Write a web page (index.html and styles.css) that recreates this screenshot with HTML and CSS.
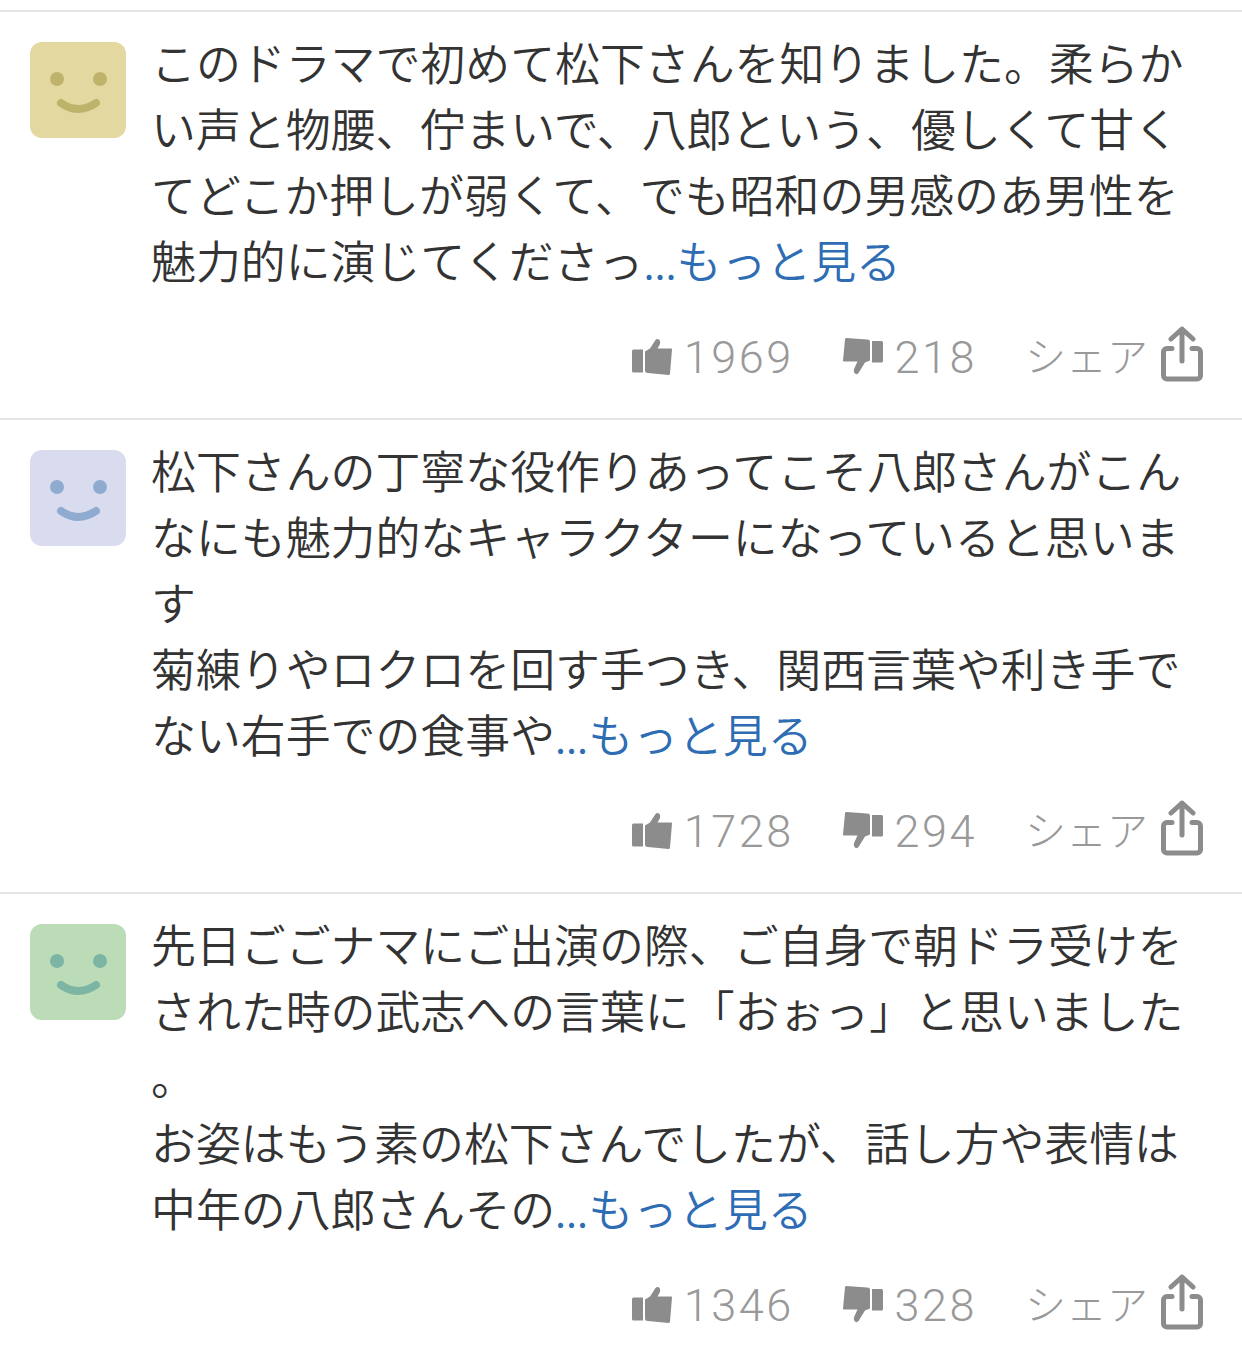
FILE: index.html
```html
<!DOCTYPE html>
<html>
    <head>
        <meta charset="utf-8">
        <title>コメント</title>
        <link rel="stylesheet" href="styles.css">
    </head>
    <body>
      <svg class="defs" width="0" height="0">
        <symbol id="good" viewBox="0 0 40 37">
          <path d="M1.500 11.500h9.500v23H1.500a1.500 1.500 0 0 1-1.500-1.500V13a1.500 1.500 0 0 1 1.500-1.500z"/>
          <path d="M13 13.500l5-3 5.500-8.500c1-1.500 3-1.500 4 0 1 1.500.8 3.500 0 5l-2 3.500H39c.8 0 1 .5 1 1l-2 24c-.1.8-.6 1.500-1.500 1.500L16 35c-2 0-3-.8-3-2.500z"/>
        </symbol>
        <symbol id="bad" viewBox="0 0 40 37">
          <path d="M38.500 3h-9.500v21.500h9.500a1.500 1.500 0 0 0 1.500-1.500V4.500A1.500 1.500 0 0 0 38.500 3z"/>
          <path d="M27 22.500l-5 2-6.500 10.500c-1 1.500-3 1.500-4 0-1-1.500-.8-3.500 0-5l3-6.500H1c-.8 0-1-.5-1-1L2 1.500C2.100.7 2.600 0 3.500 0L24 1.500c2 0 3 .8 3 2.500z"/>
        </symbol>
        <symbol id="share" viewBox="0 0 42 56">
          <path d="M11 22.500H6a3.500 3.500 0 0 0-3.500 3.500v23.500A3.500 3.500 0 0 0 6 53h30a3.500 3.500 0 0 0 3.500-3.500V26a3.500 3.500 0 0 0-3.500-3.500h-5M21 35V3M10 13L21 3l11 10"/>
        </symbol>
      </svg>

      <div class="comment">
        <div class="avatar yellow">
          <svg viewBox="0 0 96 96"><circle class="eye" cx="27" cy="37" r="7"/><circle class="eye" cx="70" cy="37" r="7"/><path class="mouth" d="M31 61q17 12 35 0"/></svg>
        </div>
        <div class="body">
          <p class="text">このドラマで初めて松下さんを知りました。柔らか<br>い声と物腰、佇まいで、八郎という、優しくて甘く<br>てどこか押しが弱くて、でも昭和の男感のあ男性を<br>魅力的に演じてくださっ<a class="more" href="#"><span class="dots">...</span>もっと見る</a></p>
          <div class="actions">
            <svg class="ico"><use href="#good"/></svg><span class="num">1969</span>
            <svg class="ico bad"><use href="#bad"/></svg><span class="num">218</span>
            <span class="shr">シェア</span><svg class="ico-share"><use href="#share"/></svg>
          </div>
        </div>
      </div>

      <div class="comment">
        <div class="avatar blue">
          <svg viewBox="0 0 96 96"><circle class="eye" cx="27" cy="37" r="7"/><circle class="eye" cx="70" cy="37" r="7"/><path class="mouth" d="M31 61q17 12 35 0"/></svg>
        </div>
        <div class="body">
          <p class="text">松下さんの丁寧な役作りあってこそ八郎さんがこん<br>なにも魅力的なキャラクターになっていると思いま<br>す<br>菊練りやロクロを回す手つき、関西言葉や利き手で<br>ない右手での食事や<a class="more" href="#"><span class="dots">...</span>もっと見る</a></p>
          <div class="actions">
            <svg class="ico"><use href="#good"/></svg><span class="num">1728</span>
            <svg class="ico bad"><use href="#bad"/></svg><span class="num">294</span>
            <span class="shr">シェア</span><svg class="ico-share"><use href="#share"/></svg>
          </div>
        </div>
      </div>

      <div class="comment">
        <div class="avatar green">
          <svg viewBox="0 0 96 96"><circle class="eye" cx="27" cy="37" r="7"/><circle class="eye" cx="70" cy="37" r="7"/><path class="mouth" d="M31 61q17 12 35 0"/></svg>
        </div>
        <div class="body">
          <p class="text">先日ごごナマにご出演の際、ご自身で朝ドラ受けを<br>された時の武志への言葉に「おぉっ」と思いました<br>。<br>お姿はもう素の松下さんでしたが、話し方や表情は<br>中年の八郎さんその<a class="more" href="#"><span class="dots">...</span>もっと見る</a></p>
          <div class="actions">
            <svg class="ico"><use href="#good"/></svg><span class="num">1346</span>
            <svg class="ico bad"><use href="#bad"/></svg><span class="num">328</span>
            <span class="shr">シェア</span><svg class="ico-share"><use href="#share"/></svg>
          </div>
        </div>
      </div>
    </body>
</html>
```

FILE: styles.css
```css
html, body {
    height: 1346px;
    overflow: hidden;
}

body {
    margin: 0;
    padding-top: 10px;
    box-sizing: border-box;
    background-color: #fff;
    font-family: "Noto Sans CJK JP", sans-serif;
    font-weight: 350;
    color: #333;
}

.defs { position: absolute; }

.comment {
    display: flex;
    gap: 25px;
    height: 474px;
    padding: 17px 40px 0 30px;
    box-sizing: border-box;
    border-top: 2px solid #e4e4e4;
}

.comment:first-of-type { height: 408px; }

.avatar {
    flex: none;
    width: 96px;
    height: 96px;
    margin-top: 13px;
    border-radius: 12px;
}
.avatar svg { display: block; width: 96px; height: 96px; }
.mouth { fill: none; stroke-width: 8; stroke-linecap: round; }

.yellow { background-color: #e3d89f; }
.yellow .eye { fill: #bfb36c; }
.yellow .mouth { stroke: #bfb36c; }
.blue { background-color: #d9dbee; }
.blue .eye { fill: #8facd0; }
.blue .mouth { stroke: #8facd0; }
.green { background-color: #bcdcb8; }
.green .eye { fill: #7db5a5; }
.green .mouth { stroke: #7db5a5; }

.body { flex: 1; min-width: 0; }

.text {
    margin: 0;
    font-size: 44.9px;
    line-height: 66px;
    white-space: nowrap;
}

.more { color: #2e6db4; text-decoration: none; }
.dots { font-size: 41px; }

.actions {
    display: flex;
    align-items: center;
    justify-content: flex-end;
    margin-top: 36px;
    height: 56px;
    color: #999;
}

.ico { width: 40px; height: 37px; fill: #8c8c8c; margin-right: 12px; margin-bottom: 4px; }
.ico.bad { margin-left: 49px; margin-right: 12px; }
.ico-share {
    width: 42px;
    height: 56px;
    margin-left: 13px;
    margin-right: -1px;
    margin-bottom: 8px;
    fill: none;
    stroke: #8c8c8c;
    stroke-width: 5;
    stroke-linecap: round;
    stroke-linejoin: round;
}

.num {
    font-family: Roboto, sans-serif;
    font-weight: 300;
    font-size: 45px;
    line-height: 56px;
    letter-spacing: 2.5px;
}

.shr {
    margin-left: 48px;
    margin-bottom: 8px;
    font-size: 41px;
    line-height: 56px;
    font-weight: 300;
}
```
